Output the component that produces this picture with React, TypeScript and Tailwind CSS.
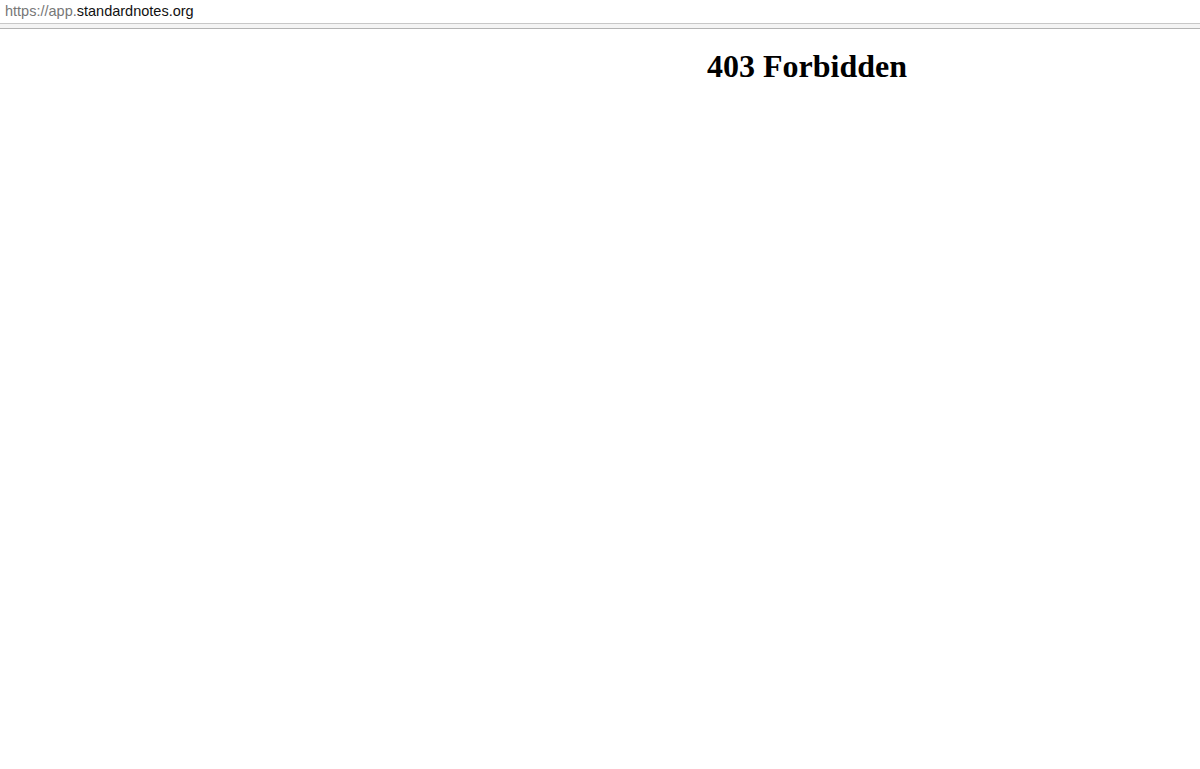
export default function App() {
  return (
    <div className="w-[1200px] h-[769px] bg-white overflow-hidden">
      <div className="h-[23px] pl-[5px] pt-[3px] text-[14.5px] leading-[17px] font-['Liberation_Sans',Arial,sans-serif]">
        <span className="text-[#777]">https://app.</span>
        <span className="text-[#111]">standardnotes.org</span>
      </div>
      <div className="h-px bg-[#c8c8c8]" />
      <div className="h-[4px] bg-[#f4f4f4]" />
      <div className="h-px bg-[#b4b4b4]" />
      <div className="pl-[707px] pt-[19px]">
        <h1 className="text-[32px] leading-[37px] font-bold text-black font-['Liberation_Serif','Times_New_Roman',serif]">
          403 Forbidden
        </h1>
      </div>
    </div>
  );
}
